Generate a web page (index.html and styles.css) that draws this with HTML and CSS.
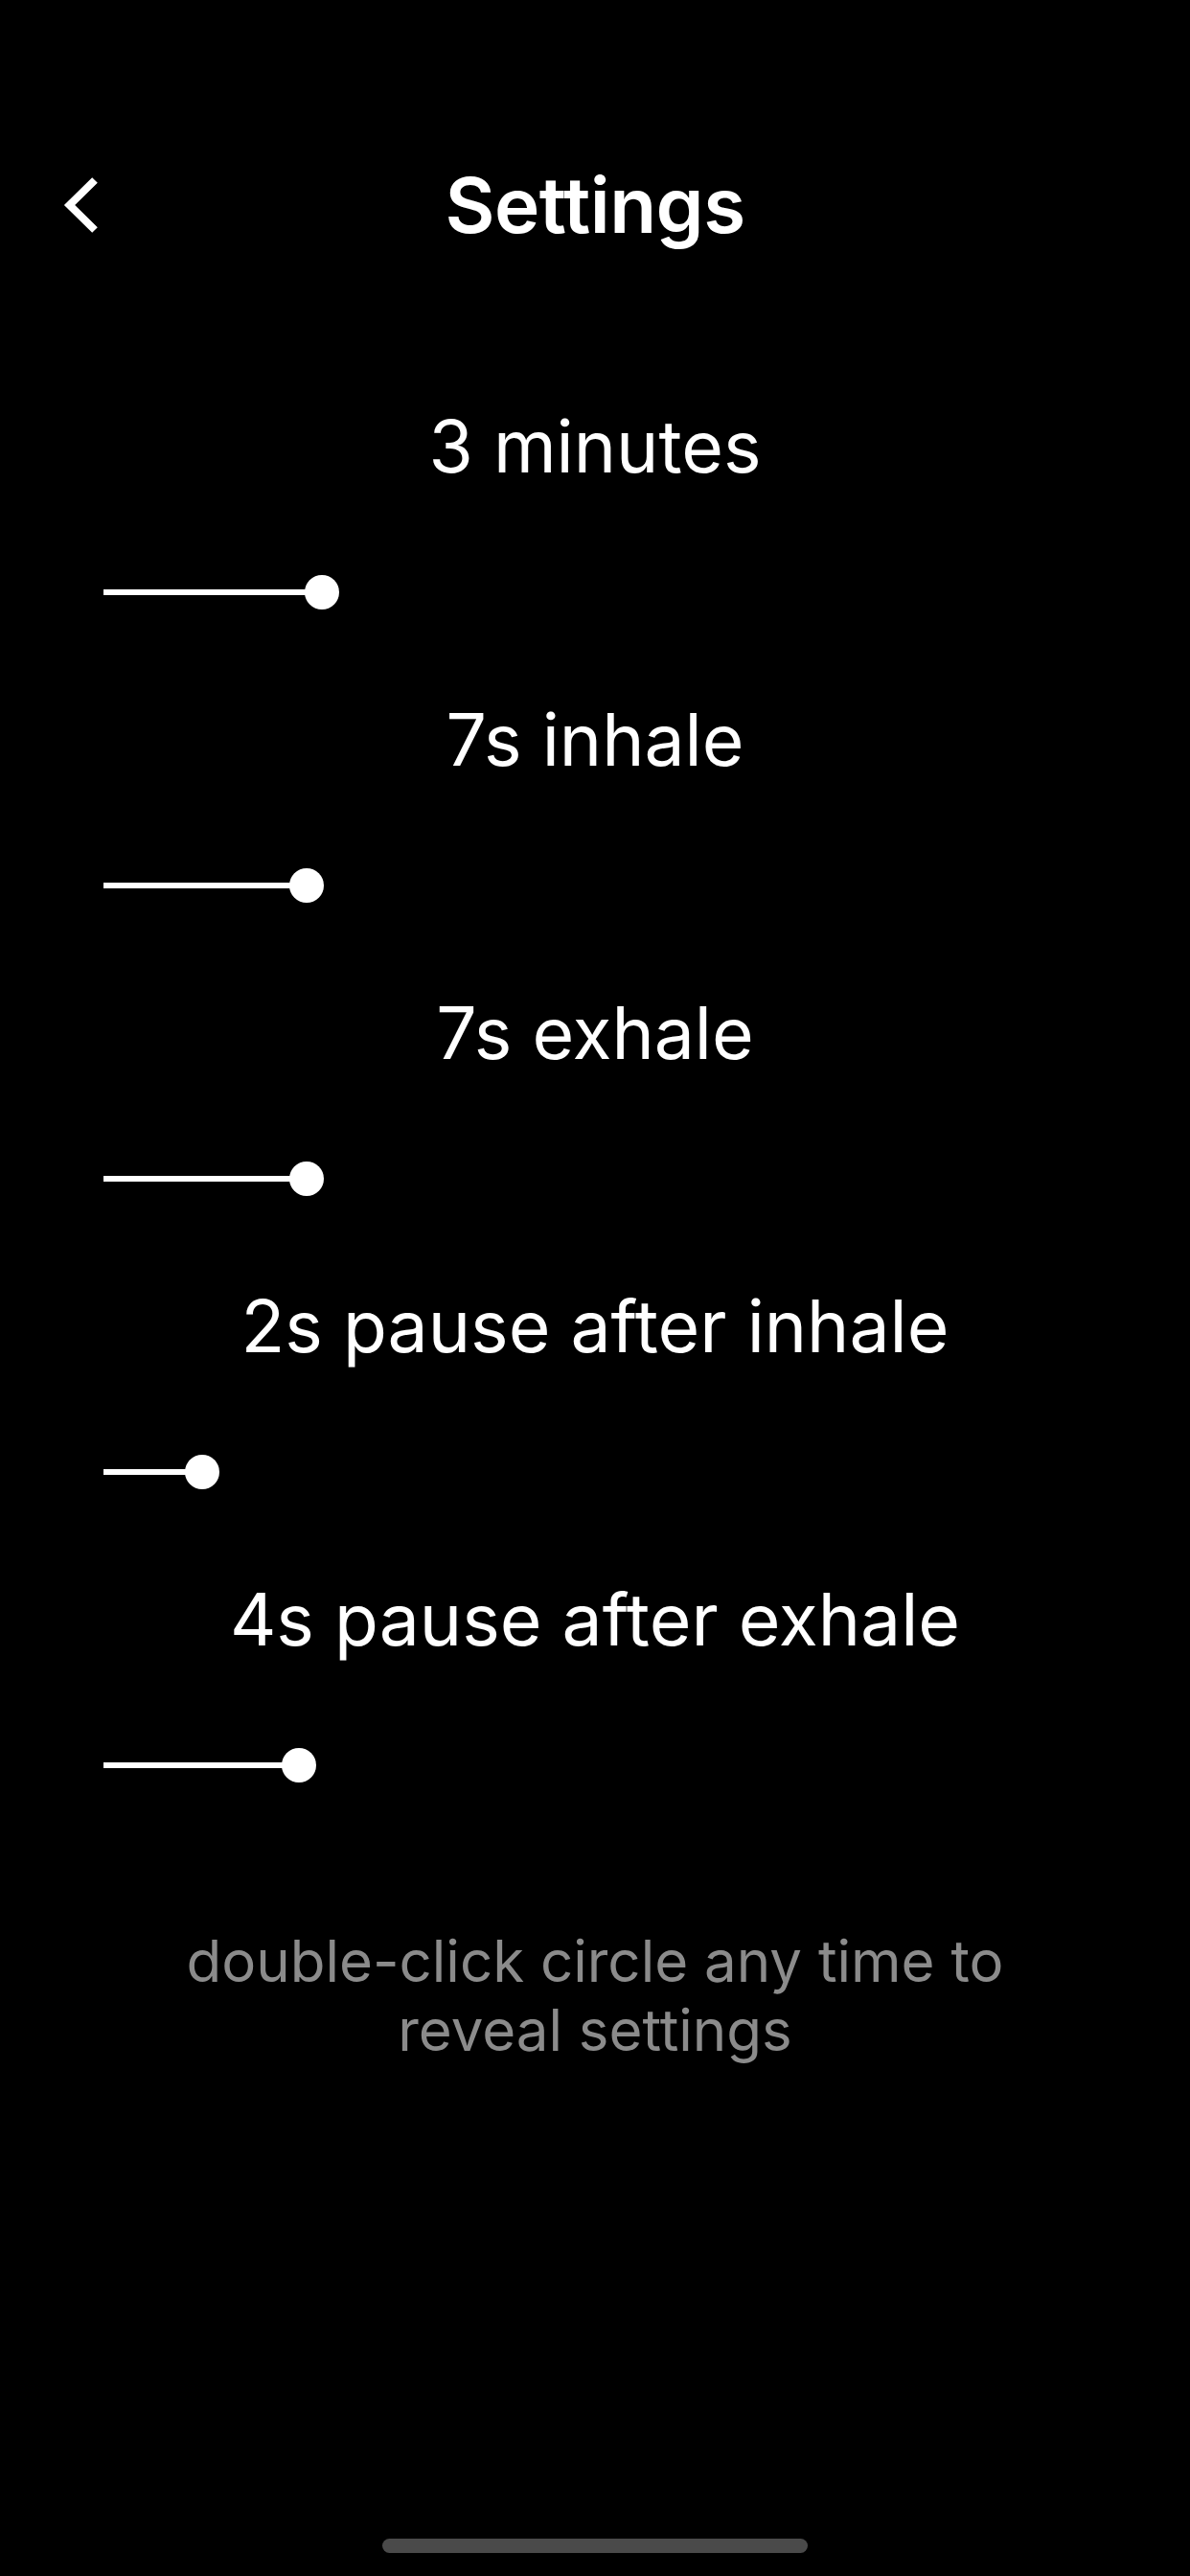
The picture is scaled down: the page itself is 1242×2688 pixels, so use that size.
FILE: index.html
```html
<!DOCTYPE html>
<html>
  <head>
    <link rel="stylesheet" href="styles.css">
  </head>
  <body>
    <div class="screen">
      <div class="nav">
        <div class="nav-left">
          <svg class="back" width="50" height="70" viewBox="0 0 50 70">
            <polyline points="39,9 12.6,35 39,61" fill="none" stroke="#fff" stroke-width="8" stroke-linejoin="miter"></polyline>
          </svg>
        </div>
        <h1 class="title">Settings</h1>
        <div></div>
      </div>

      <div class="settings">
        <div class="setting">
          <div class="label">3 minutes</div>
          <div class="slider"><div class="fill" style="width: 228px"></div><div class="thumb"></div></div>
        </div>
        <div class="setting">
          <div class="label">7s inhale</div>
          <div class="slider"><div class="fill" style="width: 212px"></div><div class="thumb"></div></div>
        </div>
        <div class="setting">
          <div class="label">7s exhale</div>
          <div class="slider"><div class="fill" style="width: 212px"></div><div class="thumb"></div></div>
        </div>
        <div class="setting">
          <div class="label">2s pause after inhale</div>
          <div class="slider"><div class="fill" style="width: 103px"></div><div class="thumb"></div></div>
        </div>
        <div class="setting">
          <div class="label">4s pause after exhale</div>
          <div class="slider"><div class="fill" style="width: 204px"></div><div class="thumb"></div></div>
        </div>
      </div>

      <p class="hint">double-click circle any time to<br>reveal settings</p>

      <div class="home-indicator"></div>
    </div>
  </body>
</html>
```

FILE: styles.css
```css
body {
  margin: 0;
  background-color: #000;
  font-family: Inter, "Noto Sans", sans-serif;
  color: #fff;
}
.screen {
  width: 1242px;
  height: 2688px;
  display: flex;
  flex-direction: column;
}
.nav {
  display: grid;
  grid-template-columns: 1fr auto 1fr;
  align-items: center;
  padding-top: 167px;
}
.nav-left {
  padding-left: 60px;
  display: flex;
  align-items: center;
}
.back {
  display: block;
}
.title {
  margin: 0;
  font-size: 80px;
  line-height: 94px;
  font-weight: 600;
  letter-spacing: -0.5px;
}
.settings {
  display: flex;
  flex-direction: column;
  gap: 92px;
  margin-top: 161px;
}
.setting {
  display: flex;
  flex-direction: column;
  gap: 90px;
}
.label {
  text-align: center;
  font-size: 75px;
  line-height: 88px;
  font-weight: 400;
}
.slider {
  margin-left: 108px;
  height: 36px;
  display: flex;
  align-items: center;
}
.fill {
  height: 6px;
  background-color: #fff;
}
.thumb {
  width: 36px;
  height: 36px;
  border-radius: 50%;
  background-color: #fff;
  margin-left: -18px;
}
.hint {
  margin: 150px 0 0;
  text-align: center;
  font-size: 60px;
  line-height: 72px;
  color: #8b8b8b;
}
.home-indicator {
  margin: auto auto 24px;
  width: 444px;
  height: 15px;
  border-radius: 8px;
  background-color: #4a4a4a;
}
```
